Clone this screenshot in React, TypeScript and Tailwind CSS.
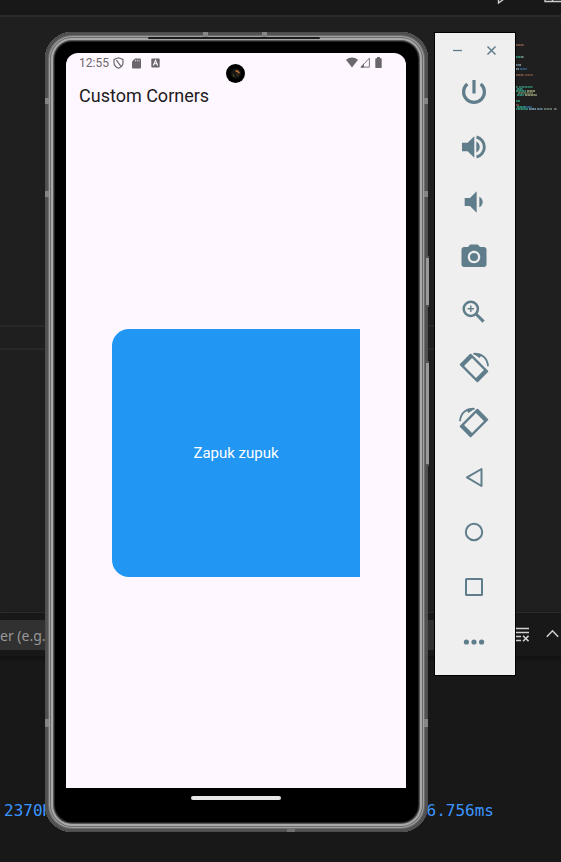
import type { ReactNode } from "react";
import { MdVolumeDown, MdPhotoCamera } from "react-icons/md";

function RotateGlyph({ mirrored = false }: { mirrored?: boolean }) {
  return (
    <svg viewBox="0 0 32 32" className={mirrored ? "size-8 -scale-x-100" : "size-8"}>
      <g transform="translate(16 17) rotate(45)" fill="currentColor">
        <path
          fillRule="evenodd"
          d="M-11.8 -8H11.8Q12.8 -8 12.8 -7V7Q12.8 8 11.8 8H-11.8Q-12.8 8 -12.8 7V-7Q-12.8 -8 -11.8 -8ZM-8.4 -5.6V5.6H8.4V-5.6Z"
        />
      </g>
      <path d="M15.5 2.8C23 1.8 29.6 7 30 15.3" fill="none" stroke="currentColor" strokeWidth="1.8" />
      <path d="M15 2.4L24 3.2L21.6 7Z" fill="currentColor" />
    </svg>
  );
}

function Outline({ children, weight = 2 }: { children: ReactNode; weight?: number }) {
  return (
    <svg viewBox="0 0 32 32" className="size-8" fill="none" stroke="currentColor" strokeWidth={weight} strokeLinejoin="round">
      {children}
    </svg>
  );
}

const controls: { label: string; icon: ReactNode }[] = [
  {
    label: "Power",
    icon: (
      <Outline weight={3.2}>
        <path d="M16 4V17.4M9.3 8A10.4 10.4 0 1 0 22.7 8" />
      </Outline>
    ),
  },
  {
    label: "Volume up",
    icon: (
      <Outline weight={2.9}>
        <path d="M4 11.8V20.2H9.6L16.3 26.8V5.2L9.6 11.8Z" fill="currentColor" stroke="none" />
        <path d="M18.3 10.6V21.4A6 6 0 0 0 18.3 10.6Z" fill="currentColor" stroke="none" />
        <path d="M18.5 6A10.3 10.3 0 0 1 18.5 26" />
      </Outline>
    ),
  },
  { label: "Volume down", icon: <MdVolumeDown className="size-8" /> },
  { label: "Take screenshot", icon: <MdPhotoCamera className="size-8 p-px" /> },
  {
    label: "Zoom",
    icon: (
      <Outline weight={2.5}>
        <circle cx="12.8" cy="12.8" r="7.1" />
        <path d="M18 18L25.6 25.6" strokeWidth="3" />
        <path d="M12.8 9.6V16M9.6 12.8H16" strokeWidth="1.4" />
      </Outline>
    ),
  },
  { label: "Rotate left", icon: <RotateGlyph /> },
  { label: "Rotate right", icon: <RotateGlyph mirrored /> },
  { label: "Back", icon: <Outline><path d="M23.5 8V25L9 16.4Z" /></Outline> },
  { label: "Home", icon: <Outline><circle cx="16" cy="16" r="8.2" /></Outline> },
  { label: "Overview", icon: <Outline><rect x="8" y="8" width="16" height="16" rx="0.5" /></Outline> },
  {
    label: "More",
    icon: (
      <svg viewBox="0 0 32 32" className="size-8" fill="currentColor">
        <circle cx="8.4" cy="16" r="2.6" />
        <circle cx="16" cy="16" r="2.6" />
        <circle cx="23.6" cy="16" r="2.6" />
      </svg>
    ),
  },
];

// Each entry: x, y, width, colour of one run of code in the minimap.
const minimapRuns: [number, number, number, string][] = [
  [0, 1, 9, "#8a5f4c"],
  [0, 13, 6, "#35a085"], [6, 13, 3, "#7f9c8a"],
  [0, 21, 5, "#6d93a8"], [5, 21, 1, "#aaaaaa"],
  [0, 25, 4, "#7ca6bd"], [5, 25, 7, "#35658c"],
  [0, 31, 9, "#8a5f4c"], [10, 31, 8, "#75503f"],
  [0, 43, 3, "#35a085"], [4, 43, 14, "#358a76"],
  [2, 45, 6, "#35a085"],
  [1, 47, 10, "#35a085"], [12, 47, 8, "#a7a77f"],
  [3, 49, 15, "#71825f"],
  [2, 51, 7, "#35a085"], [10, 51, 12, "#a7a77f"],
  [0, 57, 5, "#35a085"],
  [0, 61, 4, "#8a5f4c"],
  [2, 63, 8, "#35a085"], [10, 63, 7, "#356d98"],
  [0, 65, 13, "#35a085"], [14, 65, 7, "#7ca6bd"], [22, 65, 6, "#6d93a8"], [29, 65, 8, "#718575"], [39, 65, 3, "#888888"],
];

function EditorBackground() {
  return (
    <div className="flex min-h-screen flex-col bg-[#181818]">
      <header className="flex h-[17px] items-start justify-end border-b-2 border-[#2b2b2b]">
        <svg width="66" height="4" viewBox="0 0 66 4" fill="none" stroke="#cccccc" strokeWidth="1.4">
          <path d="M3.5 -4V3L9 -1" />
          <path d="M50 -2V1.5H66M57.5 -2V1" />
        </svg>
      </header>
      <section className="flex h-[595px] bg-[#1f1f1f]">
        <div className="flex-1 pt-[308px]">
          <div className="h-[25px] border-y-2 border-[#282828]" />
        </div>
        <svg className="mt-[26px]" width="46" height="70" viewBox="0 0 46 70">
          {minimapRuns.map(([x, y, w, color]) => (
            <path key={`${x}-${y}`} d={`M${x} ${y + 1}h${w}`} stroke={color} strokeWidth="1.3" strokeDasharray="2.4 0.4" />
          ))}
        </svg>
      </section>
      <section className="flex h-11 items-center border-t border-[#2b2b2b] shadow-[0_2px_3px_#101010]">
        <input
          aria-label="Filter"
          placeholder="er (e.g."
          className="h-[30px] min-w-0 flex-1 bg-[#313131] pt-0.5 font-['Noto_Sans',sans-serif] text-sm text-[#cccccc] outline-none placeholder:text-[#989898]"
        />
        <div className="flex w-[120px] items-center justify-end gap-[17px] pr-0.5">
          <button type="button" aria-label="Clear console">
            <svg width="16" height="16" viewBox="0 0 16 16" fill="none" stroke="#d0d0d0" strokeWidth="1.6">
              <path d="M0 1.5H16M0 5.5H16M0 9.5H8M0 13.5H8M10 8.8L15.5 14.2M15.5 8.8L10 14.2" />
            </svg>
          </button>
          <button type="button" aria-label="Maximize panel">
            <svg width="13" height="16" viewBox="0 0 13 16" fill="none" stroke="#cccccc" strokeWidth="1.6">
              <path d="M0.8 9.8L6.5 3.8L12.2 9.8" />
            </svg>
          </button>
        </div>
      </section>
      <div className="mt-[143px] flex justify-between pl-1 pr-[67px] font-['DejaVu_Sans_Mono',monospace] text-base/6 text-[#3b94ff]">
        <span>2370K</span>
        <span>36.756ms</span>
      </div>
    </div>
  );
}

function StatusBar() {
  return (
    <div className="flex h-5 items-center justify-between pl-[13px] pr-6 text-[#6a676c]">
      <div className="flex items-center">
        <span className="text-xs">12:55</span>
        <svg className="ml-1" width="11" height="12" viewBox="0 0 11 12" fill="none" stroke="currentColor" strokeWidth="1.2">
          <path d="M5.5 0.8L10 2.4V5.5Q10 9.5 5.5 11.2Q1 9.5 1 5.5V2.4Z" />
          <path d="M3.4 3.2L7.8 9.2" />
        </svg>
        <svg className="ml-2" width="9" height="11" viewBox="0 0 9 11" fill="currentColor">
          <path d="M3 0.5H8Q9 0.5 9 1.5V9.5Q9 10.5 8 10.5H1Q0 10.5 0 9.5V3.5Z" />
          <path d="M3.5 1.8V3.4M5.3 1.8V3.4M7.1 1.8V3.4" stroke="#fef7ff" strokeWidth="0.7" />
        </svg>
        <svg className="ml-2.5" width="9" height="10" viewBox="0 0 9 10">
          <rect x="0.3" y="0.5" width="8.4" height="9" rx="1" fill="currentColor" />
          <path d="M2.3 7.5L4.5 2.3L6.7 7.5M3.2 5.8H5.8" fill="none" stroke="#fef7ff" strokeWidth="1.1" />
        </svg>
      </div>
      <div className="flex items-center pb-0.5">
        <svg width="12" height="11" viewBox="0 0 12 11" fill="currentColor">
          <path d="M0 2.7Q6 -1.7 12 2.7L6 10.5Z" />
        </svg>
        <svg className="ml-[2px]" width="10" height="11" viewBox="0 0 10 11">
          <path d="M0.9 10.1L9.4 1.2V10.1Z" fill="none" stroke="currentColor" strokeWidth="0.9" />
          <path d="M0.5 10.5L4 6.6V10.5Z" fill="currentColor" />
        </svg>
        <svg className="ml-[5px]" width="7" height="11" viewBox="0 0 7 11" fill="currentColor">
          <path d="M2 0H5V1.2H6Q6.7 1.2 6.7 2V10.2Q6.7 11 6 11H1Q0.3 11 0.3 10.2V2Q0.3 1.2 1 1.2H2Z" />
        </svg>
      </div>
    </div>
  );
}

function Phone() {
  return (
    <div className="absolute left-[45px] top-8 flex w-[383px] flex-col rounded-[27px] bg-black pl-[21px] pr-[22px] pt-[21px] shadow-[inset_0_0_0_1px_#4c4c4c,inset_0_0_0_3px_#525252,inset_0_0_0_4px_#6c6c6c,inset_0_0_0_5px_#a0a0a0,inset_0_0_0_6px_#6c6c6c,inset_0_0_0_8px_#a8a8a8,inset_0_0_0_9px_#555555,inset_0_0_0_10px_#222222]">
      {/* Antenna bands, the speaker slot and the side keys sit on top of the metal rim. */}
      <span className="absolute left-0 top-[66px] h-1.5 w-1 bg-[#858585]" />
      <span className="absolute left-0 top-[159px] h-1.5 w-1 bg-[#858585]" />
      <span className="absolute bottom-[105px] left-0 h-2 w-1 bg-[#858585]" />
      <span className="absolute right-0 top-[66px] h-1.5 w-1 bg-[#858585]" />
      <span className="absolute right-0 top-[159px] h-1.5 w-1 bg-[#858585]" />
      <span className="absolute bottom-[105px] right-0 h-2 w-1 bg-[#858585]" />
      <span className="absolute left-[158px] top-0 h-1.5 w-[5px] bg-[#858585]" />
      <span className="absolute right-[161px] top-0 h-1.5 w-[5px] bg-[#858585]" />
      <span className="absolute bottom-0 right-[133px] h-1 w-2 bg-[#707070]" />
      <span className="absolute left-[103px] top-[5px] h-0.5 w-[172px] rounded-full bg-[#1c1c1c]" />
      <span className="absolute -right-px top-[224px] h-[51px] w-[3px] border-y-2 border-[#555555] bg-[#999999]" />
      <span className="absolute -right-px top-[329px] h-[105px] w-[3px] border-y-2 border-[#555555] bg-[#999999]" />
      <main className="flex h-[735px] flex-col rounded-t-xl bg-[#fef7ff] font-[Roboto,sans-serif]">
        <StatusBar />
        <h1 className="h-11 pl-[13px] pt-[11px] text-lg/6 text-[#1d1b20]">Custom Corners</h1>
        <div className="flex flex-1 items-center justify-center">
          <div className="flex size-[248px] items-center justify-center rounded-l-[17px] bg-[#2196f3] pt-0.5 text-[15px] text-white">
            Zapuk zupuk
          </div>
        </div>
      </main>
      <div className="flex h-11 justify-center pt-2">
        <span className="h-1 w-[90px] rounded-full bg-[#e6e6e6]" />
      </div>
      <svg className="absolute left-[181px] top-8" width="19" height="19" viewBox="0 0 19 19">
        <circle cx="9.5" cy="9.5" r="9.5" />
        <circle cx="10" cy="9.5" r="5" fill="#171713" />
        <path d="M9.5 6.2Q12.5 5.5 14 9L12.5 9.8Q11.5 7.8 9.5 7.8Z" fill="#b06a38" />
        <path d="M6.5 9L9 12.5L7.2 12.8Z" fill="#4b4a22" />
        <path d="M10.5 10L12 12" stroke="#5d3b2b" strokeWidth="1" />
      </svg>
    </div>
  );
}

function EmulatorToolbar() {
  return (
    <aside className="absolute left-[434px] top-8 w-[82px] border border-black bg-[#efefef] pb-[6px] text-[#607d8b]">
      <div className="flex h-[31px] items-end justify-between pb-2 pl-4 pr-[17px]">
        <button type="button" aria-label="Minimize">
          <svg width="13" height="11" viewBox="0 0 13 11" stroke="currentColor" strokeWidth="1.3">
            <path d="M2 5.5H11" />
          </svg>
        </button>
        <button type="button" aria-label="Close">
          <svg width="13" height="11" viewBox="0 0 13 11" stroke="currentColor" strokeWidth="1.5">
            <path d="M2.5 1.5L10.5 9.5M10.5 1.5L2.5 9.5" />
          </svg>
        </button>
      </div>
      {controls.map(({ label, icon }) => (
        <button key={label} type="button" aria-label={label} className="flex h-[55px] w-full items-start justify-center pr-0.5 pt-3">
          {icon}
        </button>
      ))}
    </aside>
  );
}

export default function App() {
  return (
    <div className="relative overflow-hidden">
      <EditorBackground />
      <Phone />
      <EmulatorToolbar />
    </div>
  );
}
